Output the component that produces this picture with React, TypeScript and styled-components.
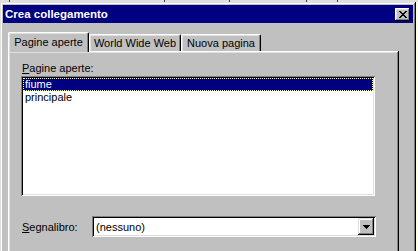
import React from "react";
import styled, { createGlobalStyle } from "styled-components";

const GlobalStyle = createGlobalStyle`
  html, body { margin: 0; padding: 0; }
  body {
    background: #ffffe1;
    font-family: "Liberation Sans", Arial, sans-serif;
    font-size: 11px;
    -webkit-font-smoothing: none;
  }
`;

const Screen = styled.div`
  width: 418px;
  height: 251px;
  overflow: hidden;
  display: flex;
  flex-direction: column;
  background: #ffffe1;
`;

const TopStrip = styled.div`
  height: 2px;
  flex: none;
  display: flex;
  background: #dfdfdf;
`;

const StripSegment = styled.div<{ $w: number }>`
  width: ${(p) => p.$w}px;
  flex: none;
  border-right: 1px solid #404040;
`;

const Window = styled.div`
  width: 416px;
  height: 290px;
  flex: none;
  box-sizing: border-box;
  padding: 3px;
  background: #c0c0c0;
  box-shadow: inset -1px -1px #000, inset 1px 1px #dfdfdf,
    inset -2px -2px #808080, inset 2px 2px #fff;
  display: flex;
  flex-direction: column;
`;

const TitleBar = styled.div`
  height: 18px;
  flex: none;
  background: #000080;
  display: flex;
  align-items: center;
  justify-content: space-between;
  padding: 0 3px 0 2px;
`;

const Title = styled.span`
  color: #fff;
  font-weight: bold;
  font-size: 11.5px;
`;

const CloseButton = styled.div`
  width: 15px;
  height: 13px;
  background: #c0c0c0;
  box-shadow: inset -1px -1px #000, inset 1px 1px #fff,
    inset -2px -2px #808080, inset 2px 2px #dfdfdf;
  display: flex;
  align-items: center;
  justify-content: center;
`;

const Body = styled.div`
  flex: 1;
  display: flex;
  flex-direction: column;
  padding: 9px 14px 0 5px;
`;

const TabRow = styled.div`
  display: flex;
  align-items: flex-end;
  height: 20px;
  margin-bottom: -1px;
  position: relative;
  z-index: 1;
`;

const Tab = styled.div<{ $w: number; $active?: boolean }>`
  width: ${(p) => p.$w}px;
  height: ${(p) => (p.$active ? 20 : 17)}px;
  margin-bottom: ${(p) => (p.$active ? 0 : 1)}px;
  box-sizing: border-box;
  background: #c0c0c0;
  display: flex;
  align-items: ${(p) => (p.$active ? "flex-start" : "center")};
  padding-top: ${(p) => (p.$active ? 3 : 0)}px;
  justify-content: center;
  color: #000;
  white-space: nowrap;
  border-top-left-radius: 2px;
  border-top-right-radius: 2px;
  border-top: 1px solid #fff;
  border-left: 1px solid #fff;
  border-right: 1px solid #000;
  box-shadow: inset -1px 0 #808080, inset 1px 1px #dfdfdf;
`;

const Panel = styled.div`
  width: 391px;
  flex: 1;
  box-sizing: border-box;
  background: #c0c0c0;
  box-shadow: inset -1px -1px #000, inset 1px 1px #fff,
    inset -2px -2px #808080, inset 2px 2px #dfdfdf;
  padding: 11px 0 0 13px;
  display: flex;
  flex-direction: column;
`;

const FieldLabel = styled.div`
  height: 13px;
  line-height: 13px;
  margin-left: 1px;
  color: #000;
  white-space: nowrap;
`;

const ListBox = styled.div`
  margin-top: 1px;
  width: 354px;
  height: 120px;
  box-sizing: border-box;
  padding: 2px;
  background: #fff;
  box-shadow: inset 1px 1px #808080, inset -1px -1px #fff,
    inset 2px 2px #000, inset -2px -2px #dfdfdf;
  display: flex;
  flex-direction: column;
`;

const ListItem = styled.div<{ $selected?: boolean }>`
  height: 13px;
  line-height: 13px;
  padding-left: 2px;
  color: ${(p) => (p.$selected ? "#fff" : "#000")};
  background: ${(p) => (p.$selected ? "#000080" : "transparent")};
  outline: ${(p) => (p.$selected ? "1px dotted #ffff80" : "none")};
  outline-offset: -1px;
  white-space: nowrap;
`;

const ComboRow = styled.div`
  margin-top: 20px;
  display: flex;
  align-items: center;
`;

const ComboLabel = styled.div`
  width: 70px;
  margin-left: 1px;
  color: #000;
`;

const Combo = styled.div`
  width: 284px;
  height: 21px;
  box-sizing: border-box;
  padding: 2px;
  background: #fff;
  box-shadow: inset 1px 1px #808080, inset -1px -1px #fff,
    inset 2px 2px #000, inset -2px -2px #dfdfdf;
  display: flex;
  align-items: center;
`;

const ComboText = styled.div`
  flex: 1;
  padding-left: 2px;
  color: #000;
  white-space: nowrap;
`;

const DropButton = styled.div`
  width: 16px;
  height: 17px;
  background: #c0c0c0;
  box-shadow: inset -1px -1px #000, inset 1px 1px #dfdfdf,
    inset -2px -2px #808080, inset 2px 2px #fff;
  display: flex;
  align-items: center;
  justify-content: center;
`;

const Key = styled.span`
  text-decoration: underline;
`;

const CloseGlyph = () => (
  <svg width="8" height="7" viewBox="0 0 8 7" shapeRendering="crispEdges">
    <path
      d="M0 0h2v1H0zM6 0h2v1H6zM1 1h2v1H1zM5 1h2v1H5zM2 2h4v1H2zM3 3h2v1H3zM2 4h4v1H2zM1 5h2v1H1zM5 5h2v1H5zM0 6h2v1H0zM6 6h2v1H6z"
      fill="#000"
    />
  </svg>
);

const ArrowGlyph = () => (
  <svg width="7" height="4" viewBox="0 0 7 4" shapeRendering="crispEdges">
    <path d="M0 0h7v1H0zM1 1h5v1H1zM2 2h3v1H2zM3 3h1v1H3z" fill="#000" />
  </svg>
);

export default function App() {
  return (
    <Screen>
      <GlobalStyle />
      <TopStrip>
        <StripSegment $w={9} />
        <StripSegment $w={154} />
        <StripSegment $w={64} />
        <StripSegment $w={76} />
        <StripSegment $w={30} />
      </TopStrip>
      <Window>
        <TitleBar>
          <Title>Crea collegamento</Title>
          <CloseButton>
            <CloseGlyph />
          </CloseButton>
        </TitleBar>
        <Body>
          <TabRow>
            <Tab $w={81} $active>
              Pagine aperte
            </Tab>
            <Tab $w={92}>World Wide Web</Tab>
            <Tab $w={80}>Nuova pagina</Tab>
          </TabRow>
          <Panel>
            <FieldLabel>
              <Key>P</Key>agine aperte:
            </FieldLabel>
            <ListBox>
              <ListItem $selected>fiume</ListItem>
              <ListItem>principale</ListItem>
            </ListBox>
            <ComboRow>
              <ComboLabel>
                <Key>S</Key>egnalibro:
              </ComboLabel>
              <Combo>
                <ComboText>(nessuno)</ComboText>
                <DropButton>
                  <ArrowGlyph />
                </DropButton>
              </Combo>
            </ComboRow>
          </Panel>
        </Body>
      </Window>
    </Screen>
  );
}
